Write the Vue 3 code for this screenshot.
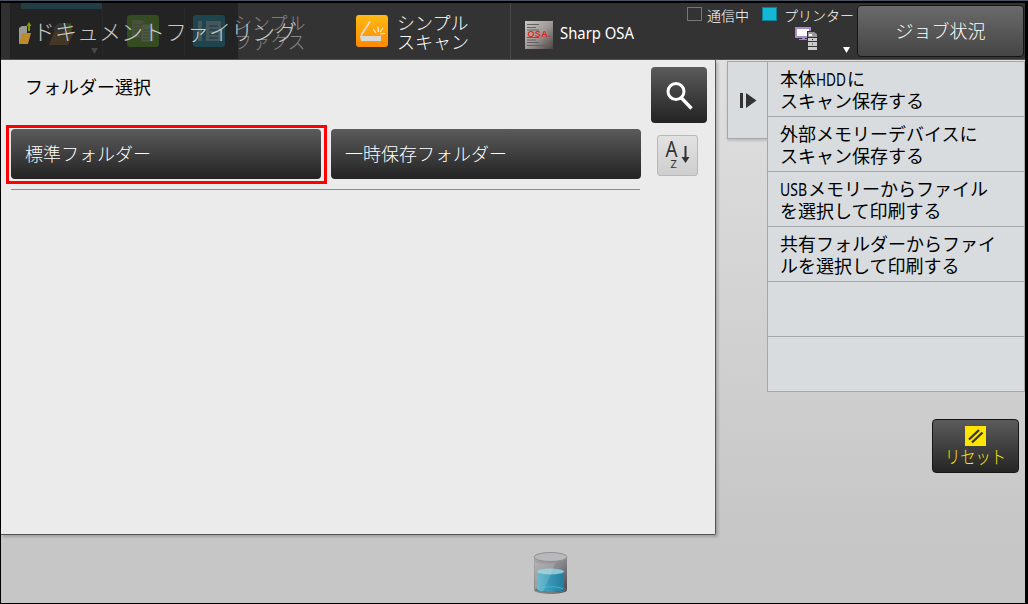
<script setup>
const shortcuts = [
  [{ t: '本体' }, { t: 'HDD', w: 31 }, { t: 'に' }, { br: true }, { t: 'スキャン保存する' }],
  [{ t: '外部メモリーデバイスに' }, { br: true }, { t: 'スキャン保存する' }],
  [{ t: 'USB', w: 28 }, { t: 'メモリーからファイル' }, { br: true }, { t: 'を選択して印刷する' }],
  [{ t: '共有フォルダーからファイ' }, { br: true }, { t: 'ルを選択して印刷する' }],
  [],
  [],
]
const folders = ['標準フォルダー', '一時保存フォルダー']
</script>

<template>
  <div class="screen">
    <header class="topbar">
      <div class="modes">
        <svg class="ghost-icons" width="237" height="56" viewBox="0 0 237 56">
          <rect x="0" y="0" width="9" height="56" fill="#303030" />
          <rect x="20" y="0" width="81" height="6" fill="#203e43" />
          <path d="M101.500 6V53M183.500 6V53" stroke="#292929" />
          <path d="M53 24l5-4h12v13H53z" fill="#343434" />
          <path d="M53 29h20l-6 13H48z" fill="#443725" />
          <path d="M68.500 20l4 4.500h-2V29h-4v-4.500h-2z" fill="#3c4c1c" />
          <path d="M18 25l3-2h5v17h-8z" fill="#999b98" />
          <path d="M21 30h9l-3 11h-9z" fill="#bd8a2c" />
          <path d="M28 19l2.500 4h-1.500v5h-2v-5h-1.500z" fill="#829b00" />
          <path d="M90 45h7l-3.500 6z" fill="#464646" />
          <rect x="126" y="12" width="32" height="32" rx="3" fill="#354c22" />
          <path d="M131 17h10l3 3v15h-13z" fill="#48513f" />
          <path d="M140 21h9l4 4v14h-13z" fill="#505746" stroke="#354c22" />
          <path d="M133 22h6M133 25h6M133 28h6M133 31h6M142 27h8M142 30h8M142 33h8M142 36h8" stroke="#354c22" />
          <rect x="192" y="12" width="32" height="32" rx="3" fill="#1e454e" />
          <path d="M197 18h4v20h-4zM205 18h15v20h-15z" fill="#47565a" />
          <path d="M208 23h9M208 27h9M208 31h9M208 35h9" stroke="#1e454e" stroke-width="1.500" />
        </svg>
        <span class="ghost-label">シンプル<br />ファクス</span>
        <h1 class="mode-title">ドキュメントファイリング</h1>
      </div>
      <div class="mode scan">
        <svg width="32" height="32" viewBox="0 0 32 32">
          <defs><linearGradient id="orange" x2="0" y2="1"><stop stop-color="#ffba14" /><stop offset="1" stop-color="#ff8a00" /></linearGradient></defs>
          <rect width="32" height="32" rx="3" fill="url(#orange)" />
          <path d="M14 6.500L5 20.500" stroke="#e4e0d7" stroke-width="1.700" />
          <path d="M4 21h21v5H5z" fill="#d9dad9" />
          <path d="M17 14l3 4M22 12l.5 5M27 13l-3 4M29 18.500l-5 .5" stroke="#fff0cf" stroke-width="1.200" />
        </svg>
        <span>シンプル<br />スキャン</span>
      </div>
      <div class="mode osa">
        <svg width="28" height="28" viewBox="0 0 28 28">
          <defs><linearGradient id="paper" x2="1" y2="1"><stop stop-color="#c9c5c2" /><stop offset=".5" stop-color="#a09b99" /><stop offset="1" stop-color="#4a4341" /></linearGradient></defs>
          <rect width="28" height="28" fill="url(#paper)" />
          <path d="M2 3.500h12M2 6.500h9M2 9h12M2 16.500h12M2 19h9M2 21.500h12M2 24.500h23" stroke="#655f5d" />
          <text x="2.500" y="15.500" textLength="23" class="osa-mark">OSA.</text>
        </svg>
        <svg class="osa-name" width="84" height="28"><text x="0" y="18" textLength="74" lengthAdjust="spacingAndGlyphs">Sharp OSA</text></svg>
      </div>
      <div class="status">
        <div class="lamps">
          <i class="lamp"></i><span class="comm">通信中</span>
          <i class="lamp on"></i><span>プリンター</span>
        </div>
        <svg class="network" width="60" height="30" viewBox="0 0 60 30">
          <path d="M1 1h14v9H1z" fill="#fff" stroke="#a78ccd" stroke-width="2" />
          <path d="M7 10h3v2h2v1H4v-1h3z" fill="#a78ccd" />
          <path d="M12 4h7l4 3v18H12z" fill="#333" />
          <path d="M13 5h6l3 2v3h-9z" fill="#999" />
          <path d="M14 7h3v2h-3z" fill="#fff" />
          <path d="M13 11h9v3h-9zM13 15h9v4h-9zM13 20h9v3h-9z" fill="#ccc" />
          <path d="M17 12.500h1M17 17h1" stroke="#333" />
          <path d="M48 20h7l-3.500 6z" fill="#fff" />
        </svg>
      </div>
      <button class="jobs">ジョブ状況</button>
    </header>

    <div class="content">
      <main class="panel">
        <div class="panel-head">
          <h2>フォルダー選択</h2>
          <button class="search" aria-label="検索">
            <svg width="56" height="56" viewBox="0 0 56 56" fill="none" stroke="#fff">
              <circle cx="25" cy="24.500" r="8" stroke-width="3" />
              <path d="M30.500 31L40.500 41.500" stroke-width="3.300" />
            </svg>
          </button>
        </div>
        <div class="folder-area">
          <div class="folders">
            <button v-for="(folder, i) in folders" :key="folder" class="folder" :class="{ selected: i === 0 }">{{ folder }}</button>
          </div>
          <button class="sort">
            <svg width="39" height="39" viewBox="0 0 39 39">
              <text x="7.500" y="21" class="letter-a" textLength="12" lengthAdjust="spacingAndGlyphs">A</text>
              <text x="12.500" y="32" class="letter-z">Z</text>
              <path d="M27.500 10v13" stroke="#333" stroke-width="2" />
              <path d="M23.500 21h8l-4 6z" fill="#333" />
            </svg>
          </button>
        </div>
      </main>
      <aside class="side">
        <button class="collapse" aria-label="閉じる">
          <svg width="39" height="76" viewBox="0 0 39 76"><path d="M12 31h3v15h-3zM18 31l10.500 7.500L18 46z" fill="#333" /></svg>
        </button>
        <ul class="shortcuts">
          <li v-for="(item, i) in shortcuts" :key="i">
            <template v-for="(part, j) in item" :key="j">
              <br v-if="part.br" />
              <svg v-else-if="part.w" class="latin" :width="part.w" height="20"><text x="0" y="17" :textLength="part.w - 1" lengthAdjust="spacingAndGlyphs">{{ part.t }}</text></svg>
              <span v-else>{{ part.t }}</span>
            </template>
          </li>
        </ul>
        <button class="reset">
          <svg width="21" height="20" viewBox="0 0 21 20"><rect width="21" height="20" fill="#ffe600" /><path d="M4 13.500L14 4M7 16.500L17.500 6.500" stroke="#333" stroke-width="2.300" /></svg>
          <svg class="reset-label" width="85" height="25"><text x="12" y="18" textLength="61" lengthAdjust="spacingAndGlyphs">リセット</text></svg>
        </button>
      </aside>
    </div>

    <footer class="bottom">
      <svg width="36" height="44" viewBox="0 0 36 44">
        <defs>
          <linearGradient id="glass" x2="1" y2="1"><stop stop-color="#aaaaae" /><stop offset=".5" stop-color="#88878d" /><stop offset="1" stop-color="#424248" /></linearGradient>
          <linearGradient id="water" x2="1"><stop stop-color="#4cb0c8" /><stop offset="1" stop-color="#237c9f" /></linearGradient>
        </defs>
        <path d="M1 5v33c0 5 33 5 33 0V5z" fill="url(#glass)" />
        <ellipse cx="17.500" cy="5" rx="16.500" ry="4.500" fill="#b9b9bb" stroke="#919195" />
        <ellipse cx="17.500" cy="37.500" rx="15.500" ry="3" fill="#454850" stroke="#999" stroke-width=".6" />
        <path d="M4 20v17c0 4 27 4 27 0V20z" fill="url(#water)" />
        <ellipse cx="17.500" cy="19.500" rx="13.500" ry="3" fill="#8bc6d2" />
        <path d="M5 37c4-3 21-3 25 0" fill="none" stroke="#38b7d4" />
        <path d="M2 10c5 2 14 2 21 0L10 40l-8-2z" fill="#fff" opacity=".15" />
      </svg>
    </footer>
  </div>
</template>

<style>
body { margin: 0; overflow: hidden; }
</style>

<style scoped>
* { box-sizing: border-box; }
.screen {
  width: 1028px; height: 604px; display: flex; flex-direction: column;
  border: solid #000; border-width: 3px 3px 1px 1px;
  background: linear-gradient(#e3e3e3, #c6c6c6 90%);
  font-family: "Noto Sans CJK JP", sans-serif; font-weight: 400; font-size: 18px; color: #000;
  position: relative;
}
.screen::before { content: ""; position: absolute; left: -1px; top: -3px; width: 1028px; height: 1px; background: #485160; }
h1, h2, ul { margin: 0; padding: 0; font-weight: inherit; list-style: none; }
button { border: 0; padding: 0; font: inherit; color: #fff; }
svg { display: block; flex: none; }
.topbar { height: 57px; flex: none; display: flex; background: #333; border-bottom: 1px solid #525252; color: #fff; font-weight: 300; }
.modes { width: 340px; position: relative; display: flex; }
.ghost-icons { background: #232323; margin-right: -4px; }
.ghost-label { color: #858585; line-height: 19px; padding-top: 10px; white-space: nowrap; }
.mode-title { position: absolute; left: 32px; top: 10px; font-size: 22px; line-height: 34px; color: #c8c8c8; white-space: nowrap; }
.mode { display: flex; }
.scan { width: 170px; padding: 12px 0 0 15px; gap: 9px; line-height: 19px; border-right: 1px solid #484848; }
.scan span { margin-top: -2px; }
.osa { width: 155px; padding: 18px 0 0 14px; gap: 7px; }
.osa-mark { font: bold 9px "Liberation Sans", sans-serif; fill: #df2525; }
.osa-name { overflow: visible; }
.osa-name text { font: 400 16.5px "Noto Sans", sans-serif; fill: #fff; }
.status { width: 191px; padding: 2px 0 0 21px; }
.lamps { height: 21px; display: flex; align-items: center; font-size: 14px; white-space: nowrap; margin-top: -1px; }
.lamp { width: 15px; height: 14px; border: 1px solid #777; margin-right: 5px; margin-top: -1px; }
.comm { margin-right: 13px; }
.lamp.on { background: #15b7d6; border-color: #0b8198; margin-right: 7px; }
.network { margin: 2px 0 0 108px; }
.jobs { width: 167px; height: 52px; margin-top: 2px; padding-bottom: 2px; border: 1px solid #161616; border-radius: 4px; background: linear-gradient(#6a6a6a, #454545); }
.content { display: flex; height: 475px; }
.panel { width: 715px; background: #ebebeb; border: solid #555; border-width: 0 1px 1px 0; border-radius: 0 0 2px 0; box-shadow: 2px 2px 3px #0003; }
.panel-head { display: flex; justify-content: space-between; padding: 7px 8px 0 24px; height: 69px; }
.panel-head h2 { font-size: 18px; line-height: 38px; }
.search { width: 56px; height: 56px; border-radius: 4px; background: linear-gradient(#5b5b5b, #232323); }
.folder-area { display: flex; margin-left: 10px; }
.folders { width: 629px; height: 61px; display: flex; gap: 10px; border-bottom: 1px solid #8d8d8d; }
.folder { position: relative; width: 310px; flex: none; height: 50px; border-radius: 4px; background: linear-gradient(#5b5b5b, #232323); text-align: left; padding: 0 0 2px 14px; font-weight: 300; }
.folder.selected::after { content: ""; position: absolute; inset: -4px -6px -5px -5px; border: 3px solid #f00; }
.sort { width: 41px; height: 41px; margin: 6px 0 0 17px; border: 1px solid #b8b8b8; border-radius: 3px; background: linear-gradient(#e2e2e2, #cecece); }
.letter-a { font: 21px "Noto Sans", sans-serif; fill: #333; }
.letter-z { font: 11px "Noto Sans", sans-serif; fill: #333; }
.side { flex: 1; display: grid; grid-template-columns: 40px 258px; grid-template-rows: 331px 1fr; padding: 1px 0 0 11px; }
.collapse { width: 41px; height: 78px; border: 1px solid #a5a8ab; background: #d8dcdf; box-shadow: 0 2px 2px #0002; }
.shortcuts { height: 331px; border: solid #a5a8ab; border-width: 1px 1px 0 1px; background: #d8dcdf; z-index: 1; }
.shortcuts li { height: 55px; border-bottom: 1px solid #a5a8ab; padding: 5px 0 0 12px; line-height: 22px; white-space: nowrap; }
.latin { display: inline-block; vertical-align: -3px; height: 20px; overflow: visible; }
.latin text { font: 17.5px "Noto Sans", sans-serif; }
.reset { grid-column: 2; justify-self: end; width: 87px; height: 54px; margin: 27px 6px 0 0; border: 1px solid #161616; border-radius: 4px; background: linear-gradient(#5b5b5b, #252525); display: flex; flex-direction: column; align-items: center; padding-top: 6px; }
.reset-label text { font-size: 18px; font-weight: 300; fill: #ffe600; }
.bottom { flex: 1; display: flex; padding: 17px 0 0 532px; }
</style>
